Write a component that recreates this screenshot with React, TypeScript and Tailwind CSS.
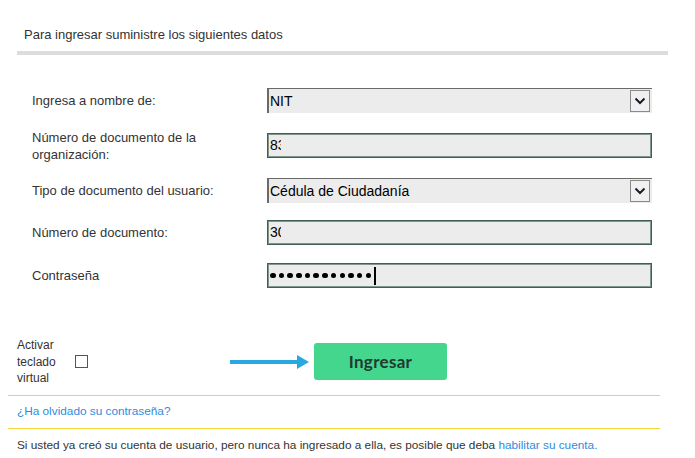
import React from 'react';

const Chevron = () => (
  <svg width="12" height="8" viewBox="0 0 12 8">
    <path d="M1.5 1.5 L6 6 L10.5 1.5" fill="none" stroke="#1b1b2b" strokeWidth="2" />
  </svg>
);

const SelectBox = ({ value }: { value: string }) => (
  <div className="flex h-[25px] w-[385px] items-stretch bg-[#ececec] border-t border-l-2 border-t-[#6a6a6a] border-l-[#6a6a6a]">
    <div className="flex flex-1 items-center pl-[1px] text-[14px] text-black">{value}</div>
    <div className="my-[1px] mr-[2px] flex w-[20px] items-center justify-center border border-[#8a8a8a] bg-[#f0f0f0]">
      <Chevron />
    </div>
  </div>
);

const TextBox = ({ children }: { children: React.ReactNode }) => (
  <div className="flex h-[25px] w-[385px] items-center border border-[#3f5f50] bg-[#ececec] pl-[2px] text-[14px] text-black shadow-[inset_0_0_0_1px_#7f978b]">
    {children}
  </div>
);

const Row = ({ label, children, className }: { label: React.ReactNode; children: React.ReactNode; className?: string }) => (
  <div className={`flex h-[25px] items-center ${className ?? ''}`}>
    <div className="w-[267px] shrink-0 pl-[32px] text-[13px] leading-[17px] text-[#333]">{label}</div>
    {children}
  </div>
);

export default function App() {
  return (
    <div className="h-[458px] w-[695px] overflow-hidden bg-white font-['Liberation_Sans',Arial,sans-serif]">
      <div className="pl-[24px] pt-[26px] text-[13px] leading-[18px] text-[#333]">
        Para ingresar suministre los siguientes datos
      </div>
      <div className="ml-[17px] mt-[7px] h-[4px] w-[651px] bg-[#dcdcdc]" />

      <div className="mt-[33px]">
        <Row label="Ingresa a nombre de:">
          <SelectBox value="NIT" />
        </Row>
        <Row label={<>Número de documento de la<br />organización:</>} className="mt-[20px]">
          <TextBox>
            <span className="w-[11px] overflow-hidden whitespace-nowrap">83</span>
          </TextBox>
        </Row>
        <Row label="Tipo de documento del usuario:" className="mt-[20px]">
          <SelectBox value="Cédula de Ciudadanía" />
        </Row>
        <Row label="Número de documento:" className="mt-[17px]">
          <TextBox>
            <span className="w-[11px] overflow-hidden whitespace-nowrap">30</span>
          </TextBox>
        </Row>
        <Row label="Contraseña" className="mt-[18px]">
          <TextBox>
            <div className="flex gap-[3.2px]">
              {Array.from({ length: 12 }).map((_, i) => (
                <span key={i} className="h-[5.5px] w-[5.5px] rounded-full bg-black" />
              ))}
            </div>
            <span className="ml-[3px] h-[18px] w-[1.5px] bg-black" />
          </TextBox>
        </Row>
      </div>

      <div className="mt-[49px] flex items-center">
        <div className="w-[75px] shrink-0 pl-[17px] text-[12px] leading-[16.5px] text-[#333]">
          Activar<br />teclado<br />virtual
        </div>
        <div className="h-[13px] w-[13px] border border-[#555] bg-white" />
        <svg className="ml-[142px]" width="79" height="14" viewBox="0 0 79 14">
          <rect x="0" y="5" width="68" height="4" fill="#29a8e0" />
          <path d="M67 0 L79 7 L67 14 Z" fill="#29a8e0" />
        </svg>
        <button className="ml-[5px] flex h-[37px] w-[133px] items-center justify-center rounded-[3px] bg-[#45d68d] font-['Lato',sans-serif] text-[17px] font-bold tracking-[0.3px] text-[#1f3a33]">
          Ingresar
        </button>
      </div>

      <div className="ml-[8px] mt-[8px] h-[1px] w-[652px] bg-[#f7d23a]" />
      <div className="flex h-[32px] items-center pl-[17px] text-[11.8px] text-[#2f8be0]">
        ¿Ha olvidado su contraseña?
      </div>
      <div className="ml-[8px] h-[1px] w-[652px] bg-[#f7d23a]" />
      <div className="pl-[17px] pt-[8px] text-[11.8px] text-[#333]">
        Si usted ya creó su cuenta de usuario, pero nunca ha ingresado a ella, es posible que deba{' '}
        <span className="text-[#2f8be0]">habilitar su cuenta.</span>
      </div>
    </div>
  );
}
